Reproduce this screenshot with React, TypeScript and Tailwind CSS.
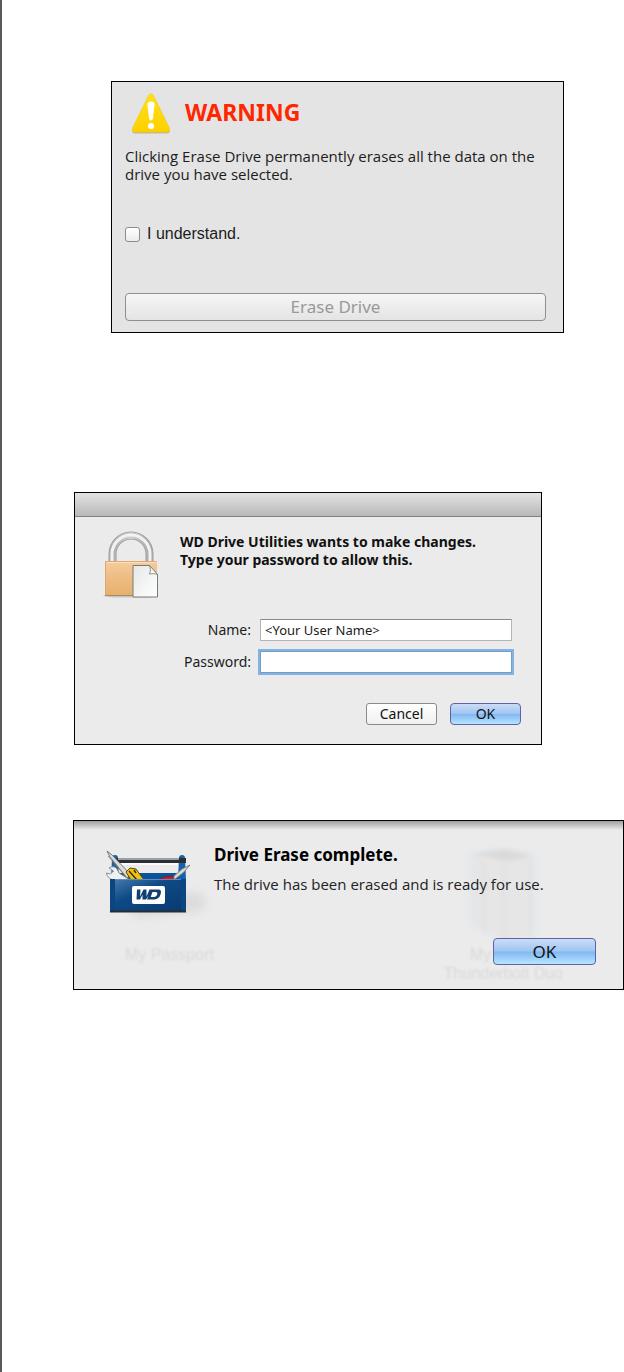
import type { ReactNode } from "react";

function WarningIcon() {
  return (
    <svg viewBox="0 0 40 42" className="w-10 h-[42px] shrink-0" aria-hidden="true">
      <defs>
        <linearGradient id="warn" x1="0" y1="0" x2="0" y2="1">
          <stop offset="0" stopColor="#ffe11c" />
          <stop offset="1" stopColor="#ffd000" />
        </linearGradient>
      </defs>
      <path
        d="M17.6 2.6Q20 -1 22.4 2.6L38.4 35Q39.6 38.800 36 39H4Q.4 38.800 1.6 35Z"
        fill="#b09c58"
        opacity=".6"
        transform="translate(0 1.500)"
      />
      <path
        d="M17.600 2.600Q20 -1 22.400 2.600L38.400 35Q39.600 38.800 36 39H4Q.400 38.800 1.600 35Z"
        fill="url(#warn)"
        stroke="#f3c800"
        strokeWidth=".6"
      />
      <path d="M16.400 11.800Q16.400 8.600 20 8.600T23.600 11.800L21.900 25.400Q21.600 27.400 20 27.400T18.100 25.400Z" fill="#fff" />
      <circle cx="20" cy="33" r="3.1" fill="#fff" />
    </svg>
  );
}

function LockIcon() {
  return (
    <svg viewBox="0 0 57 68" className="w-[57px] h-[68px] shrink-0" aria-hidden="true">
      <defs>
        <linearGradient id="lockBody" x1="0" y1="0" x2="0" y2="1">
          <stop offset="0" stopColor="#f6cd9d" />
          <stop offset=".35" stopColor="#efc08a" />
          <stop offset="1" stopColor="#e6b06c" />
        </linearGradient>
        <linearGradient id="shackle" x1="0" y1="0" x2="1" y2="0">
          <stop offset="0" stopColor="#b0b0b0" />
          <stop offset=".5" stopColor="#d2d2d2" />
          <stop offset="1" stopColor="#aaaaaa" />
        </linearGradient>
        <linearGradient id="page" x1="0" y1="0" x2="1" y2="1">
          <stop offset="0" stopColor="#e6e8e8" />
          <stop offset="1" stopColor="#ffffff" />
        </linearGradient>
      </defs>
      <ellipse cx="28" cy="65" rx="28" ry="1.6" fill="#c4c4c4" />
      <path d="M9.500 32V23a18.500 18.500 0 0 1 37 0v9" fill="none" stroke="#9a9a9a" strokeWidth="8" />
      <path d="M9.500 32V23a18.500 18.500 0 0 1 37 0v9" fill="none" stroke="url(#shackle)" strokeWidth="6.6" />
      <path d="M9 32V23a19 19 0 0 1 38 0v9" fill="none" stroke="#f2f2f2" strokeWidth="3" />
      <rect x="2" y="30" width="52" height="35" rx="1" fill="url(#lockBody)" />
      <path d="M2.500 64V30.500h51" fill="none" stroke="#dca970" />
      <path d="M4 31.500h49" stroke="#fbe0bd" />
      <path d="M2 64.500h52" stroke="#a98a60" />
      <path d="M30 34.500h16.500l8 9V66H30z" fill="url(#page)" stroke="#777c77" />
      <path d="M46.500 34.500q2 4.500 0 8.500q5-1 8 .5z" fill="#fafaf4" stroke="#777c77" strokeWidth=".8" />
    </svg>
  );
}

function ToolboxIcon() {
  return (
    <svg viewBox="0 0 84 64" className="w-[84px] h-16 shrink-0" aria-hidden="true">
      <defs>
        <linearGradient id="box" x1="0" y1="0" x2="1" y2="1">
          <stop offset="0" stopColor="#4a7db0" />
          <stop offset=".4" stopColor="#0e4a86" />
          <stop offset="1" stopColor="#083a70" />
        </linearGradient>
      </defs>
      {/* back wall and handle */}
      <path d="M9 23h66v8H9z" fill="#0d539c" />
      <path d="M12 13h60v2H12z" fill="#fafafa" />
      <path d="M6 8q0-3 3-3t3 3l1 22H5zM73 8q0-3 3-3t3 3l1 22h-8z" fill="#1561ac" />
      <path d="M10 8h70v5H10z" fill="#2a2e34" />
      <path d="M12 8h61v2H12z" fill="#9ba0a5" />
      {/* tools */}
      <path d="M1 1l5 4 19 20-4 3L4 7z" fill="#dcdcdc" stroke="#6d6d6d" strokeWidth=".9" />
      <path d="M2 6l19 22" stroke="#8a7a50" strokeWidth=".8" />
      <path d="M20 22l4-4 6 1 8 11H25z" fill="#f0c013" stroke="#5b4706" />
      <path d="M23 21l8 9M28 20l2 3" stroke="#3a3008" strokeWidth="1.400" />
      <path
        d="M3 18q5-3 8 1l2 4 11 7H7q-6-2-6.500-7l4 1 3-3z"
        fill="#eef0f1"
        stroke="#85898c"
        strokeWidth=".9"
      />
      <path d="M50 31q8-6 20-4l-2 4z" fill="#d51a1c" stroke="#80100e" strokeWidth=".6" />
      <path d="M68 26l8-7 8-4-6 7-10 8z" fill="#d8d8d8" stroke="#73777a" strokeWidth=".9" />
      {/* front */}
      <path d="M4 29h76v32H4z" fill="url(#box)" />
      <path d="M4 29.500h76" stroke="#5c8fbf" />
      <path d="M4 29h5v32H4zM75 29h5v32h-5z" fill="#0d4580" />
      <path d="M4 61.500h76" stroke="#272d35" strokeWidth="2" />
      <rect x="26" y="36" width="33" height="18" rx="2" fill="#fff" />
      <path
        d="M31 39.500h3.500l-.5 7 3.500-7h3l0 7 3-7H53q3 .5 1.500 5t-6 5h-7.500l1.500-4-2.500 4h-3.500v-5l-2.500 5h-3.500zM46.500 42l-1.800 5h3.500q2.400-.5 3-2.500t-.9-2.500z"
        fill="#123f73"
        fillRule="evenodd"
      />
    </svg>
  );
}

// Faint drive that shows through the sheet
function GhostDrive() {
  return (
    <svg viewBox="0 0 90 110" className="w-[90px] h-[110px] blur-[2px]" aria-hidden="true">
      <path d="M12 10L46 4l32 8v82l-32 6-34-18z" fill="#e6e6e6" stroke="#e5eaee" strokeWidth="4" />
      <path d="M15 11L46 6l31 6-26 6z" fill="#dadada" />
      <path d="M27 18v72M47 20v78M74 16v78" stroke="#e0e0e0" strokeWidth="3" />
    </svg>
  );
}

function AquaButton({ className, children }: { className: string; children: ReactNode }) {
  return (
    <button
      type="button"
      className={`rounded-[4px] border border-[#5c64a4] bg-[linear-gradient(#cddcf6,#9fc6f2_48%,#80b8f2_52%,#b8e4ff)] text-[#111111] ${className}`}
    >
      {children}
    </button>
  );
}

function WarningPanel() {
  return (
    <section className="ml-[109px] mr-[60px] border border-black bg-[#e4e4e4] pt-[11px] pr-[17px] pb-[11px] pl-[13px]">
      <div className="flex items-start gap-[14px] pl-[6px]">
        <WarningIcon />
        <h1 className="text-[23px] leading-[38px] font-bold text-[#ff2600]">WARNING</h1>
      </div>
      <p className="mt-3 font-['Open_Sans',sans-serif] text-[15px] leading-[18px] text-[#1c1c1c]">
        Clicking Erase Drive permanently erases all the data on the
        <br />
        drive you have selected.
      </p>
      <label className="mt-[42px] flex items-center gap-[7px] font-['Liberation_Sans',sans-serif] text-[16px] leading-[18px] text-[#1c1c1c]">
        <input
          type="checkbox"
          className="size-[15px] appearance-none rounded-[3px] border border-[#8c8c8c] bg-linear-to-b from-white to-[#ececec]"
        />
        I understand.
      </label>
      <button
        type="button"
        disabled
        className="mt-[50px] block h-7 w-full rounded-[4px] border border-[#8f8f8f] bg-linear-to-b from-[#f6f6f6] to-[#e4e4e4] text-[17px] leading-[20px] text-[#999999]"
      >
        Erase Drive
      </button>
    </section>
  );
}

function PasswordDialog() {
  return (
    <section className="mt-[159px] ml-[72px] mr-[82px] border border-black bg-[#ebebeb] text-[14px] leading-[18px]">
      <div className="h-6 border-b border-[#808080] bg-linear-to-b from-[#e4e4e4] to-[#b8b8b8]" />
      <form className="pt-[14px] pb-[19px]" onSubmit={(e) => e.preventDefault()}>
        <div className="flex gap-5 pl-7">
          <LockIcon />
          <p className="pt-[2px] font-bold text-[#111111]">
            WD Drive Utilities wants to make changes.
            <br />
            Type your password to allow this.
          </p>
        </div>
        <div className="mt-5 grid grid-cols-[176px_1fr] items-center gap-x-[9px] gap-y-[10px] pr-[29px]">
          <label htmlFor="name" className="text-right text-[#1c1c1c]">
            Name:
          </label>
          <input
            id="name"
            type="text"
            defaultValue="<Your User Name>"
            className="h-[22px] w-full min-w-0 border border-[#b4b4b4] border-t-[#8a8a8a] bg-white px-[4px] text-[13px] text-[#1c1c1c] outline-none"
          />
          <label htmlFor="password" className="text-right text-[#1c1c1c]">
            Password:
          </label>
          <input
            id="password"
            type="password"
            className="h-[22px] w-full min-w-0 border border-[#6f9fd0] bg-white px-[4px] text-[13px] ring-2 ring-[#86b2e0] outline-none"
          />
        </div>
        <div className="mt-[30px] flex justify-end gap-[13px] pr-5">
          <button
            type="button"
            className="h-[22px] w-[71px] rounded-[3px] border border-[#8a8a8a] bg-linear-to-b from-white to-[#f0f0f0] text-[#111111]"
          >
            Cancel
          </button>
          <AquaButton className="h-[22px] w-[71px]">OK</AquaButton>
        </div>
      </form>
    </section>
  );
}

function CompleteSheet() {
  return (
    <section className="relative mt-[75px] ml-[71px] overflow-hidden border border-black bg-[#ebebeb] pt-[24px] pr-[27px] pb-[24px] pl-8">
      <div className="absolute inset-x-0 top-0 h-[9px] bg-linear-to-b from-[#a0a0a0] to-[#ebebeb]" />
      <div className="absolute inset-0 font-['Liberation_Sans',sans-serif] text-[16px] leading-[19px] text-[#d9d9d9]">
        <div className="absolute top-[74px] left-[56px] h-5 w-[76px] -rotate-6 rounded-full bg-[#dcdcdc] blur-[4px]" />
        <span className="absolute top-[124px] left-[51px] blur-[1px]">My Passport</span>
        <div className="absolute top-[22px] right-[76px]">
          <GhostDrive />
        </div>
        <span className="absolute top-[124px] right-[60px] w-[120px] pl-[27px] blur-[1px]">My</span>
        <span className="absolute top-[143px] right-[60px] blur-[1px]">Thunderbolt Duo</span>
      </div>
      <div className="relative flex gap-6">
        <div className="pt-[5px]">
          <ToolboxIcon />
        </div>
        <div>
          <h2 className="text-[17px] leading-5 font-bold text-black">Drive Erase complete.</h2>
          <p className="mt-[10px] font-['Open_Sans',sans-serif] text-[15px] leading-[18px] text-[#222222]">
            The drive has been erased and is ready for use.
          </p>
        </div>
      </div>
      <div className="relative mt-6 flex justify-end">
        <AquaButton className="h-[27px] w-[103px] text-[17px] leading-5">OK</AquaButton>
      </div>
    </section>
  );
}

export default function App() {
  return (
    <main className="min-h-screen border-l-2 border-[#58595b] bg-white pt-[81px] font-['Noto_Sans',sans-serif]">
      <WarningPanel />
      <PasswordDialog />
      <CompleteSheet />
    </main>
  );
}
